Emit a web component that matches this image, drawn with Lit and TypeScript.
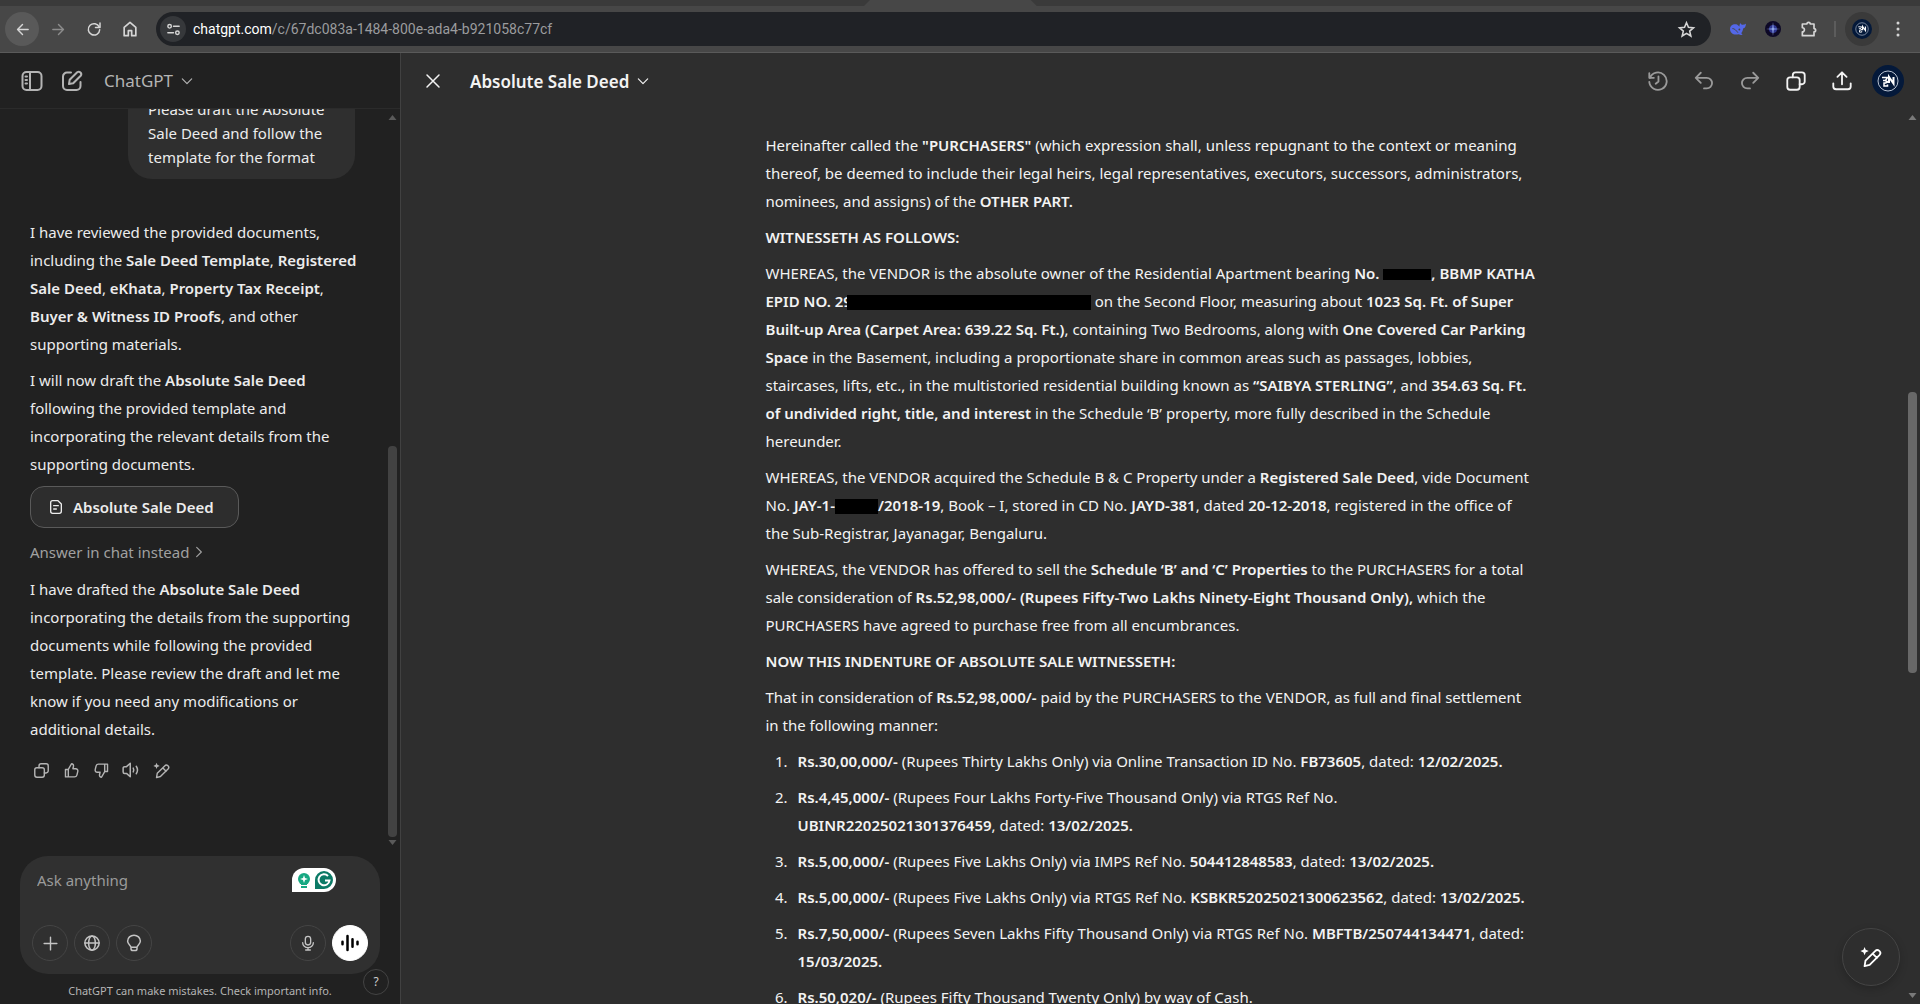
import { LitElement, html, css, svg } from "lit";
import { customElement, property } from "lit/decorators.js";

const ICONS: Record<string, unknown> = {
  back: svg`<path d="M20 12H5M12 5l-7 7 7 7"/>`,
  forward: svg`<path d="M4 12h15M12 5l7 7-7 7"/>`,
  reload: svg`<path d="M19 9.5A7.6 7.6 0 1 0 19.6 13"/><path d="M20 4v6h-6"/>`,
  home: svg`<path d="M5 10l7-6 7 6v10h-5v-6h-4v6H5z"/>`,
  tune: svg`<circle cx="6.5" cy="7.5" r="2.5"/><path d="M12 7.5h8M4 16.5h8"/><circle cx="17.5" cy="16.5" r="2.5"/>`,
  star: svg`<path stroke-linejoin="miter" d="M12 3.5l2.500 5.800 6.300.6-4.800 4.100 1.500 6.200L12 16.900l-5.500 3.300L8 14 3.200 9.900l6.300-.6z"/>`,
  puzzle: svg`<path d="M4 6h5.500a2 2 0 1 1 4 0H18v5.500a2 2 0 1 1 0 4V20H4v-4.500a2.500 2.500 0 0 0 0-5z"/>`,
  dots: svg`<g fill="currentColor" stroke="none"><circle cx="12" cy="4" r="2"/><circle cx="12" cy="12" r="2"/><circle cx="12" cy="20" r="2"/></g>`,
  sidebar: svg`<rect x="2.5" y="3" width="19" height="18" rx="4"/><path d="M10 3v18M5.500 7.500h1.500M5.500 11h1.500M5.500 14.500h1.500"/>`,
  compose: svg`<path d="M11 3.500H7A4 4 0 0 0 3 7.500V17a4 4 0 0 0 4 4h9.500a4 4 0 0 0 4-4v-4"/><path d="M9 15l.7-4.300 7.500-7.400a2.500 2.500 0 0 1 3.500 3.500l-7.500 7.500z"/>`,
  chevron: svg`<path d="M4 8.500l8 8 8-8"/>`,
  right: svg`<path d="M8 4l8 8-8 8"/>`,
  close: svg`<path d="M4 4l16 16M20 4L4 20"/>`,
  doc: svg`<path d="M7 2.500h8L20 7.500v11a3 3 0 0 1-3 3H7a3 3 0 0 1-3-3v-13a3 3 0 0 1 3-3z"/><path d="M8.500 10h7M8.500 15h4"/>`,
  history: svg`<path d="M3.200 8.500A9.500 9.500 0 1 1 2.500 13"/><path d="M2.500 3.500v5h5M12.500 7v5.500L9.500 15"/>`,
  undo: svg`<path d="M8.500 3L3 8.500 8.500 14M3 8.500h12a5.800 5.800 0 0 1 0 11.600h-3"/>`,
  redo: svg`<path d="M15.500 3L21 8.500 15.500 14M21 8.500H9a5.800 5.800 0 0 0 0 11.600h3"/>`,
  copy: svg`<rect x="2.5" y="8" width="13.5" height="13.5" rx="3"/><path d="M8.500 8V5.500a3 3 0 0 1 3-3h7a3 3 0 0 1 3 3v7a3 3 0 0 1-3 3H16"/>`,
  share: svg`<path d="M12 15.500V3M7 7.500L12 2.500l5 5M2.500 14.500V18a3 3 0 0 0 3 3h13a3 3 0 0 0 3-3v-3.500"/>`,
  up: svg`<path d="M7.500 10.500L12 2.500c2 0 3.200 1.500 2.800 3.500L14 9.500h4a3 3 0 0 1 2.900 3.700l-1.300 5.300A3.500 3.500 0 0 1 16.200 21H3.500V10.500zM7.500 10.500V21"/>`,
  down: svg`<path d="M16.500 13.500L12 21.500c-2 0-3.200-1.500-2.800-3.500l.8-3.500H6a3 3 0 0 1-2.900-3.700l1.300-5.300A3.500 3.500 0 0 1 7.800 3h12.700v10.500zM16.500 13.500V3"/>`,
  speaker: svg`<path d="M11 3v18l-5-4.500H3.500a2 2 0 0 1-2-2v-5a2 2 0 0 1 2-2H6zM15 9.500a5 5 0 0 1 0 5M19 7a9 9 0 0 1 0 10"/>`,
  edit: svg`<path d="M5 22l1-6L16.500 5.500a3.200 3.200 0 0 1 4.700 4.500L10.500 20.500zM14 8.500l4.500 4.500"/><path fill="currentColor" stroke="none" d="M5 1l1.200 3L9.500 5.500 6.200 7 5 10 3.800 7 .5 5.500 3.800 4z"/>`,
  plus: svg`<path d="M12 3v18M3 12h18"/>`,
  globe: svg`<circle cx="12" cy="12" r="9.5"/><ellipse cx="12" cy="12" rx="4.5" ry="9.5"/><path d="M2.500 12h19"/>`,
  bulb: svg`<path d="M8 17.500c0-2-4.500-4-4.500-8a8.500 8 0 0 1 17 0c0 4-4.500 6-4.500 8zM8 17.500v2a2.500 2.500 0 0 0 2.500 2.500h3a2.500 2.500 0 0 0 2.500-2.500v-2"/>`,
  mic: svg`<rect x="8" y="2" width="8" height="13" rx="4"/><path d="M4 11.500a8 7.500 0 0 0 16 0M12 19v3.500M8.500 22.500h7"/>`,
  wave: svg`<path stroke-width="3" d="M3 10.500v3M9 3.500v17M15 7.500v9M21 10.500v3"/>`,
};

const icon = (name: string, size = 20, weight = 2) => html`<svg
  width=${size} height=${size} viewBox="0 0 24 24" fill="none" stroke="currentColor"
  stroke-width=${weight} stroke-linecap="round" stroke-linejoin="round" aria-hidden="true">${ICONS[name]}</svg>`;

const avatar = (size: number) => html`<svg width=${size} height=${size} viewBox="0 0 32 32" fill="none" aria-hidden="true">
  <circle cx="16" cy="16" r="16" fill="#04193a"/>
  <circle cx="16" cy="16" r="10" stroke="#b9c3d2" stroke-width="1"/>
  <path d="M10 12.500h5.500l-2 3H11M13 15.500l3 1.500-2.500 1H12v3h3.500v-1.500" stroke="#fff" stroke-width="1.500"/>
  <path d="M17 18v-6l4.500 6.500V12" stroke="#fff" stroke-width="2"/>
</svg>`;

@customElement("scroll-rail")
export class ScrollRail extends LitElement {
  @property({ type: Number }) before = 1;
  @property({ type: Number }) thumb = 1;
  @property({ type: Number }) after = 0;

  static styles = css`
    :host { display: flex; flex-direction: column; align-items: center; width: 16px; padding: 5px 0; box-sizing: border-box; color: #5a5a5a; }
    .track { flex: 1; display: flex; flex-direction: column; padding: 3px 0; }
    .thumb { width: 9px; border-radius: 4px; background: var(--thumb, #424242); }
  `;

  render() {
    return html`
      <svg width="9" height="6" viewBox="0 0 8 6" aria-hidden="true"><path d="M0 6l4-5 4 5z" fill="currentColor"/></svg>
      <div class="track">
        <div style="flex:${this.before}"></div>
        <div class="thumb" style="flex:${this.thumb}"></div>
        <div style="flex:${this.after}"></div>
      </div>
      <svg width="9" height="6" viewBox="0 0 8 6" aria-hidden="true"><path d="M0 0l4 5 4-5z" fill="currentColor"/></svg>`;
  }
}

const resets = css`
  * { box-sizing: border-box; }
  button { font: inherit; color: inherit; background: none; border: 0; padding: 0; margin: 0; display: inline-flex; align-items: center; justify-content: center; flex: none; }
  svg { display: block; flex: none; }
  p, h1, h2, ol { margin: 0; padding: 0; font-size: inherit; font-weight: inherit; }
  b { font-weight: 600; }
`;

@customElement("browser-bar")
export class BrowserBar extends LitElement {
  static styles = [resets, css`
    :host { display: block; background: #474747; color: #d6d6d6; border-bottom: 1px solid #5a5a5a; }
    .tabs { height: 6px; background: #3a3a3a; display: grid; grid-template-columns: 45fr 9fr 46fr; }
    .tab { grid-column: 2; background: #474747; clip-path: polygon(6px 0, calc(100% - 6px) 0, 100% 100%, 0 100%); }
    .bar { height: 46px; display: flex; align-items: center; padding: 0 5px; }
    .nav { width: 34px; height: 34px; border-radius: 50%; margin-right: 2px; }
    .nav.on { background: #595959; }
    .nav.dim { color: #8c8c8c; }
    .address { flex: 1; height: 34px; border-radius: 17px; background: #202226; display: flex; align-items: center; padding: 0 15px 0 4px; margin: 0 8px 0 7px; }
    .site { width: 26px; height: 26px; border-radius: 50%; background: #36383b; margin-right: 7px; }
    .url { flex: 1; font-family: Roboto, "Noto Sans", sans-serif; font-size: 14px; color: #9b9c9e; text-decoration: none; white-space: nowrap; }
    .host { color: #fff; }
    .ext { width: 36px; height: 34px; }
    .rule { width: 2px; height: 16px; background: #5c5c5c; margin: 0 9px 0 7px; }
    .me { width: 34px; height: 34px; border-radius: 50%; background: #3a3a3a; }
    .more { width: 34px; height: 34px; margin-left: 2px; }
  `];

  render() {
    return html`
      <div class="tabs"><div class="tab"></div></div>
      <div class="bar">
        <button class="nav on" aria-label="Back">${icon("back", 17)}</button>
        <button class="nav dim" aria-label="Forward">${icon("forward", 17)}</button>
        <button class="nav" aria-label="Reload">${icon("reload", 18)}</button>
        <button class="nav" aria-label="Home">${icon("home", 20)}</button>
        <div class="address">
          <button class="site" aria-label="Site information">${icon("tune", 17)}</button>
          <a class="url" href="#"><span class="host">chatgpt.com</span>/c/67dc083a-1484-800e-ada4-b921058c77cf</a>
          <button aria-label="Bookmark">${icon("star", 19)}</button>
        </div>
        <button class="ext" aria-label="Whale extension">
          <svg width="17" height="14" viewBox="0 0 18 15"><path fill="#5468e8" d="M1 7.500C1 4 4 2 7.500 2.500c1.500.2 2.500 1.500 3.500 2.500C11 3.500 11.500 2 12 1c.8 1.500 1.800 2 3 2s1.700-.5 3-1c0 3-1 4.500-3 5-.3 2.500-1 3.800-2 5 .8.5 1 1 1.500 1.500-1.500.7-3 .2-4-.5C5 14.500 1 12 1 7.500z"/><path d="M3.500 7c2.500 0 4 2 6 4.500" fill="none" stroke="#474747" stroke-width="1"/><circle cx="11" cy="8" r="1" fill="#474747"/></svg>
        </button>
        <button class="ext" aria-label="Spark extension">
          <svg width="16" height="16" viewBox="0 0 16 16"><circle cx="8" cy="8" r="8" fill="#0d0826"/><circle cx="8" cy="8" r="4" fill="#2f3690"/><path fill="#a8c4ff" d="M8 1l.6 6.400L15 8l-6.400.6L8 15l-.6-6.400L1 8l6.400-.6z"/></svg>
        </button>
        <button class="ext" aria-label="Extensions">${icon("puzzle", 20)}</button>
        <div class="rule"></div>
        <button class="me" aria-label="Profile">${avatar(20)}</button>
        <button class="more" aria-label="Browser menu">${icon("dots", 18)}</button>
      </div>`;
  }
}

@customElement("chat-panel")
export class ChatPanel extends LitElement {
  static styles = [resets, css`
    :host { display: flex; flex-direction: column; min-height: 0; background: #212121; color: #ececec; border-right: 1px solid #414141; }
    .head { height: 56px; flex: none; display: flex; align-items: center; padding-left: 20px; color: #b4b4b4; border-bottom: 1px solid #2b2b2b; }
    .head button + button { margin-left: 16px; }
    .head .model { font-size: 17px; gap: 7px; margin-left: 20px; }
    .scroll { flex: 1; min-height: 0; display: flex; }
    .thread { flex: 1; min-width: 0; height: 100%; overflow: hidden; padding-left: 30px; }
    .bubble { width: 227px; margin: -22px 29px 39px auto; padding: 10px 20px; border-radius: 24px; background: #2f2f2f; line-height: 24px; }
    .text { line-height: 28px; margin-bottom: 8px; white-space: nowrap; }
    .file { height: 42px; padding: 0 24px 0 17px; gap: 9px; border: 1px solid #5a5a5a; border-radius: 14px; background: #2d2d2d; font-weight: 600; }
    .instead { display: flex; gap: 3px; height: 28px; margin: 10px 0 9px; color: #a0a0a0; }
    .tools { display: flex; margin: 12px 0 0 -4px; color: #b4b4b4; }
    .tools button { width: 30px; height: 30px; }
    .composer { flex: none; margin: 5px 20px 0; padding: 11px 12px 13px; height: 118px; border-radius: 28px; background: #303030; display: flex; flex-direction: column; justify-content: space-between; }
    .ask, .row { display: flex; align-items: center; }
    .ask { padding: 0 32px 0 5px; }
    .ask input { flex: 1; min-width: 0; height: 26px; padding: 0; border: 0; background: none; font: inherit; color: #ececec; outline: none; }
    .ask input::placeholder { color: #9b9b9b; opacity: 1; }
    .row { gap: 6px; }
    .round { width: 36px; height: 36px; border: 1px solid #444; border-radius: 50%; color: #c4c4c4; }
    .gap { flex: 1; }
    .voice { background: #fff; color: #000; border-color: #fff; }
    .foot { flex: none; height: 30px; padding-top: 8px; text-align: center; font-size: 11px; line-height: 18px; color: #b4b4b4; position: relative; }
    .help { position: absolute; right: 11px; top: -5px; width: 26px; height: 26px; border: 1px solid #444; border-radius: 50%; background: #212121; font-size: 12px; color: #cfcfcf; }
  `];

  render() {
    return html`
      <div class="head">
        <button aria-label="Toggle sidebar">${icon("sidebar", 24)}</button>
        <button aria-label="New chat">${icon("compose", 24)}</button>
        <button class="model">ChatGPT ${icon("chevron", 14)}</button>
      </div>
      <div class="scroll">
        <div class="thread">
          <p class="bubble">Please draft the Absolute Sale Deed and follow the template for the format</p>
          <p class="text">I have reviewed the provided documents,<br>including the <b>Sale Deed Template</b>, <b>Registered<br>Sale Deed</b>, <b>eKhata</b>, <b>Property Tax Receipt</b>,<br><b>Buyer &amp; Witness ID Proofs</b>, and other<br>supporting materials.</p>
          <p class="text">I will now draft the <b>Absolute Sale Deed</b><br>following the provided template and<br>incorporating the relevant details from the<br>supporting documents.</p>
          <button class="file">${icon("doc", 16)} Absolute Sale Deed</button>
          <button class="instead">Answer in chat instead ${icon("right", 14)}</button>
          <p class="text">I have drafted the <b>Absolute Sale Deed</b><br>incorporating the details from the supporting<br>documents while following the provided<br>template. Please review the draft and let me<br>know if you need any modifications or<br>additional details.</p>
          <div class="tools">
            <button aria-label="Copy">${icon("copy", 17)}</button>
            <button aria-label="Good response">${icon("up", 17)}</button>
            <button aria-label="Bad response">${icon("down", 17)}</button>
            <button aria-label="Read aloud">${icon("speaker", 18)}</button>
            <button aria-label="Edit in canvas">${icon("edit", 17)}</button>
          </div>
        </div>
        <scroll-rail .before=${323} .thumb=${391} .after=${0}></scroll-rail>
      </div>
      <div class="composer">
        <div class="ask">
          <input type="text" placeholder="Ask anything" aria-label="Ask anything">
          <svg width="44" height="24" viewBox="0 0 44 24" aria-hidden="true">
            <path fill="#fff" d="M12 0h20a12 12 0 0 1 0 24H0V12A12 12 0 0 1 12 0z"/>
            <circle cx="12" cy="11" r="6" fill="#16a882"/><path fill="#16a882" d="M9 15h6v2H9zM9 18h6v2H9z"/>
            <path fill="#fff" d="M12 7l1 3 3 1-3 1-1 3-1-3-3-1 3-1z"/>
            <path fill="#0b7a66" d="M32 3a9 9 0 1 1 0 18h-9v-9a9 9 0 0 1 9-9z"/>
            <path d="M36 8a5.500 5.500 0 1 0 1.500 4.500H33" fill="none" stroke="#fff" stroke-width="2"/>
          </svg>
        </div>
        <div class="row">
          <button class="round" aria-label="Attach">${icon("plus", 17)}</button>
          <button class="round" aria-label="Search">${icon("globe", 18)}</button>
          <button class="round" aria-label="Reason">${icon("bulb", 18)}</button>
          <span class="gap"></span>
          <button class="round" aria-label="Dictate">${icon("mic", 16)}</button>
          <button class="round voice" aria-label="Voice mode">${icon("wave", 20)}</button>
        </div>
      </div>
      <div class="foot">ChatGPT can make mistakes. Check important info.<button class="help" aria-label="Help">?</button></div>`;
  }
}

@customElement("canvas-panel")
export class CanvasPanel extends LitElement {
  static styles = [resets, css`
    :host { display: flex; flex-direction: column; min-width: 0; min-height: 0; background: #2e2e2e; color: #f3f3f3; position: relative; }
    .head { height: 56px; flex: none; display: flex; align-items: center; padding: 0 16px 0 23px; }
    .title { margin-left: 28px; gap: 7px; font-size: 17px; font-weight: 600; }
    .gap { flex: 1; }
    .act { display: flex; align-items: center; gap: 24px; }
    .act .dim { color: #9a9a9a; }
    .act .last { margin-left: -5px; }
    .scroll { flex: 1; min-height: 0; display: flex; }
    .view { flex: 1; min-width: 0; overflow: hidden; }
    .doc { width: 774px; max-width: 100%; margin: 0 auto; padding-top: 22px; line-height: 28px; white-space: nowrap; display: flex; flex-direction: column; gap: 8px; }
    ol { list-style: none; display: flex; flex-direction: column; gap: 8px; counter-reset: item; }
    li { display: flex; counter-increment: item; }
    li::before { content: counter(item) "."; width: 22px; margin-right: 10px; text-align: right; flex: none; }
    .mask { display: inline-block; background: #000; vertical-align: middle; }
    .mask.a { width: 48px; height: 11px; }
    .mask.b { width: 244px; height: 15px; margin-left: -5px; position: relative; }
    .mask.c { width: 43px; height: 15px; }
    .fab { position: absolute; right: 20px; bottom: 18px; width: 58px; height: 58px; border: 1px solid #454545; border-radius: 50%; background: #2e2e2e; color: #fff; box-shadow: 0 3px 8px rgba(0, 0, 0, 0.2); }
    scroll-rail { --thumb: #686868; color: #7a7a7a; }
  `];

  render() {
    return html`
      <div class="head">
        <button aria-label="Close">${icon("close", 18)}</button>
        <button class="title">Absolute Sale Deed ${icon("chevron", 14)}</button>
        <span class="gap"></span>
        <div class="act">
          <button class="dim" aria-label="Version history">${icon("history", 22)}</button>
          <button class="dim" aria-label="Undo">${icon("undo", 22)}</button>
          <button class="dim" aria-label="Redo">${icon("redo", 22)}</button>
          <button aria-label="Copy">${icon("copy", 22)}</button>
          <button aria-label="Share">${icon("share", 22)}</button>
          <button class="last" aria-label="Account">${avatar(32)}</button>
        </div>
      </div>
      <div class="scroll">
        <div class="view"><article class="doc">
          <p>Hereinafter called the <b>"PURCHASERS"</b> (which expression shall, unless repugnant to the context or meaning<br>thereof, be deemed to include their legal heirs, legal representatives, executors, successors, administrators,<br>nominees, and assigns) of the <b>OTHER PART.</b></p>
          <h2><b>WITNESSETH AS FOLLOWS:</b></h2>
          <p>WHEREAS, the VENDOR is the absolute owner of the Residential Apartment bearing <b>No. <span class="mask a"></span>, BBMP KATHA<br>EPID NO. 29<span class="mask b"></span></b> on the Second Floor, measuring about <b>1023 Sq. Ft. of Super<br>Built-up Area (Carpet Area: 639.22 Sq. Ft.)</b>, containing Two Bedrooms, along with <b>One Covered Car Parking<br>Space</b> in the Basement, including a proportionate share in common areas such as passages, lobbies,<br>staircases, lifts, etc., in the multistoried residential building known as <b>“SAIBYA STERLING”</b>, and <b>354.63 Sq. Ft.<br>of undivided right, title, and interest</b> in the Schedule ‘B’ property, more fully described in the Schedule<br>hereunder.</p>
          <p>WHEREAS, the VENDOR acquired the Schedule B &amp; C Property under a <b>Registered Sale Deed</b>, vide Document<br>No. <b>JAY-1-<span class="mask c"></span>/2018-19</b>, Book – I, stored in CD No. <b>JAYD-381</b>, dated <b>20-12-2018</b>, registered in the office of<br>the Sub-Registrar, Jayanagar, Bengaluru.</p>
          <p>WHEREAS, the VENDOR has offered to sell the <b>Schedule ‘B’ and ‘C’ Properties</b> to the PURCHASERS for a total<br>sale consideration of <b>Rs.52,98,000/- (Rupees Fifty-Two Lakhs Ninety-Eight Thousand Only),</b> which the<br>PURCHASERS have agreed to purchase free from all encumbrances.</p>
          <h2><b>NOW THIS INDENTURE OF ABSOLUTE SALE WITNESSETH:</b></h2>
          <p>That in consideration of <b>Rs.52,98,000/-</b> paid by the PURCHASERS to the VENDOR, as full and final settlement<br>in the following manner:</p>
          <ol>
            <li><p><b>Rs.30,00,000/-</b> (Rupees Thirty Lakhs Only) via Online Transaction ID No. <b>FB73605</b>, dated: <b>12/02/2025.</b></p></li>
            <li><p><b>Rs.4,45,000/-</b> (Rupees Four Lakhs Forty-Five Thousand Only) via RTGS Ref No.<br><b>UBINR22025021301376459</b>, dated: <b>13/02/2025.</b></p></li>
            <li><p><b>Rs.5,00,000/-</b> (Rupees Five Lakhs Only) via IMPS Ref No. <b>504412848583</b>, dated: <b>13/02/2025.</b></p></li>
            <li><p><b>Rs.5,00,000/-</b> (Rupees Five Lakhs Only) via RTGS Ref No. <b>KSBKR52025021300623562</b>, dated: <b>13/02/2025.</b></p></li>
            <li><p><b>Rs.7,50,000/-</b> (Rupees Seven Lakhs Fifty Thousand Only) via RTGS Ref No. <b>MBFTB/250744134471</b>, dated:<br><b>15/03/2025.</b></p></li>
            <li><p><b>Rs.50,020/-</b> (Rupees Fifty Thousand Twenty Only) by way of Cash.</p></li>
          </ol>
        </article></div>
        <scroll-rail .before=${268} .thumb=${280} .after=${316}></scroll-rail>
      </div>
      <button class="fab" aria-label="Suggest edits">${icon("edit", 22)}</button>`;
  }
}

@customElement("app-root")
export class AppRoot extends LitElement {
  static styles = css`
    :host { display: flex; flex-direction: column; height: 100vh; overflow: hidden; font-family: "Segoe UI", "Noto Sans", "Open Sans", sans-serif; font-size: 15px; background: #212121; }
    .main { flex: 1; min-height: 0; display: grid; grid-template-columns: 401px minmax(0, 1fr); grid-template-rows: minmax(0, 1fr); }
  `;

  render() {
    return html`<browser-bar></browser-bar>
      <div class="main"><chat-panel></chat-panel><canvas-panel></canvas-panel></div>`;
  }
}
